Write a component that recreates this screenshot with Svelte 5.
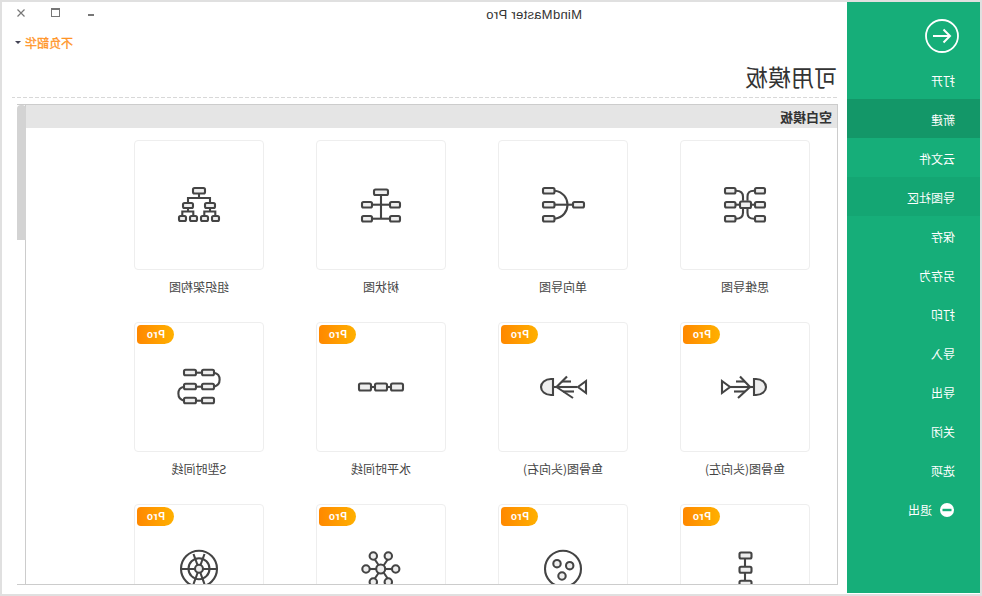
<script>
  const nav = [
    { t: '打开' }, { t: '新建', c: 'active' }, { t: '云文件' }, { t: '导图社区', c: 'hover' },
    { t: '保存' }, { t: '另存为' }, { t: '打印' }, { t: '导入' }, { t: '导出' }, { t: '关闭' }, { t: '选项' }
  ];

  const cards = [
    {
      name: '思维导图',
      p: ['M56 50.7c4 0 7 1 7 6v4', 'M56 78.7c4 0 7-1 7-6v-4', 'M74 50.7c-4 0-6.5 1-6.5 6v4', 'M74 78.7c-4 0-6.5-1-6.5-6v-4', 'M56 64.7h3', 'M71 64.7h3'],
      r: [[45, 48, 10.5, 5.5], [45, 62, 10.5, 5.5], [45, 76, 10.5, 5.5], [60, 61.5, 11, 6.5], [75, 48, 10, 5.5], [75, 62, 10, 5.5], [75, 76, 10, 5.5]]
    },
    {
      name: '单向导图',
      p: ['M57 50.7C65 52 69.5 58 69.5 64.7C69.5 71.4 65 77.4 57 78.7', 'M57 64.7H74'],
      r: [[45, 48, 11.5, 5.5], [45, 62, 11.5, 5.5], [45, 76, 11.5, 5.5], [75, 62, 11, 5.5]]
    },
    {
      name: '树状图',
      p: ['M65 55V78.7', 'M57 64.7H73', 'M57 78.7H73'],
      r: [[58, 49.5, 14, 5.5], [46, 62, 10, 5.5], [46, 76, 10, 5.5], [74, 62, 10, 5.5], [74, 76, 10, 5.5]]
    },
    {
      name: '组织架构图',
      p: ['M65 54V58', 'M54 62V58H76V62', 'M54 68V71.5', 'M48.3 75V71.5H59.3V75', 'M76 68V71.5', 'M70.3 75V71.5H81.3V75'],
      r: [[59, 48, 12, 5.5], [49, 63, 10, 5], [71, 63, 10, 5], [45, 76, 7, 5], [56, 76, 7, 5], [67, 76, 7, 5], [78, 76, 7, 5]]
    },
    {
      name: '鱼骨图(头向左)',
      pro: true,
      p: ['M50 65H74', 'M70 65L60 54.500', 'M65 59.500H56', 'M70 65L58 76', 'M65 69.500H54', 'M42 59L50 65L42 71Z'],
      s: ['M74 57H76C82 57 86 61 86 65C86 69 82 73 76 73H74Z']
    },
    {
      name: '鱼骨图(头向右)',
      pro: true,
      p: ['M55 65H79', 'M58.500 65L69 54.500', 'M64 59.500H73', 'M58.500 65L75 76', 'M65 69.500H76', 'M88 59L80 65L88 71Z'],
      s: ['M55 57H53C47 57 43 61 43 65C43 69 47 73 53 73H55Z']
    },
    {
      name: '水平时间线',
      pro: true,
      p: ['M55 65H75'],
      r: [[43, 61.500, 12, 7], [59, 61.500, 12, 7], [75, 61.500, 12, 7]]
    },
    {
      name: 'S型时间线',
      pro: true,
      p: ['M62 50.700H68', 'M62 64.700H68', 'M62 78.700H68', 'M80 50.700C87.500 52 87.500 63 80 64.700', 'M50 64.700C42.500 66 42.500 77 50 78.700'],
      r: [[50, 47.700, 12, 5.500], [68, 47.700, 12, 5.500], [50, 61.700, 12, 5.500], [68, 61.700, 12, 5.500], [50, 75.700, 12, 5.500], [68, 75.700, 12, 5.500]]
    },
    {
      name: '',
      pro: true,
      p: ['M65 55V62', 'M65 69V76'],
      r: [[59.500, 48.500, 12, 6], [59.500, 62.700, 12, 6], [59.500, 76.700, 12, 6]]
    },
    {
      name: '',
      pro: true,
      c: [[65, 64.700, 18, 'none'], [59, 59.700, 3.700], [71.700, 61.700, 3.700], [64, 72, 3.700]]
    },
    {
      name: '',
      pro: true,
      p: ['M58.500 55L72 75', 'M72 55L58.500 75', 'M54 65H76'],
      c: [[57.300, 52, 3.700], [72.300, 52, 3.700], [50, 65, 3.700], [79.700, 65, 3.700], [57.300, 78, 3.700], [72.300, 78, 3.700], [64.700, 65, 4.500]]
    },
    {
      name: '',
      pro: true,
      p: ['M47 65H83', 'M59.500 50L70.500 80', 'M70.500 50L59.500 80'],
      c: [[65, 64.700, 18, 'none'], [65, 64.700, 10.500, 'none'], [65, 64.700, 4, '#eee']]
    }
  ];
</script>

<div class="window">
  <aside class="side">
    <div class="back">
      <svg width="34" height="34" viewBox="0 0 34 34" fill="none" stroke="#fff">
        <circle cx="17" cy="17" r="16" stroke-width="1.800" />
        <path d="M26 17H9M15.500 10.500L9 17L15.500 23.500" stroke-width="2" />
      </svg>
    </div>
    {#each nav as item}
      <div class="nav {item.c ?? ''}">{item.t}</div>
    {/each}
    <div class="nav exit">
      <svg width="14" height="14" viewBox="0 0 14 14">
        <circle cx="7" cy="7" r="7" fill="#fff" />
        <rect x="2.500" y="5.800" width="9" height="2.400" fill="#16ae79" />
      </svg>
      <span>退出</span>
    </div>
  </aside>

  <main class="main">
    <div class="titlebar">
      <span class="apptitle">MindMaster Pro</span>
      <div class="controls">
        <svg width="6" height="9" viewBox="0 0 6 9"><rect y="6" width="6" height="2" fill="#777" /></svg>
        <svg width="9" height="9" viewBox="0 0 9 9" fill="none" stroke="#777"><rect x=".5" y=".5" width="8" height="8" /><path d="M0 1.500H9" /></svg>
        <svg width="8" height="8" viewBox="0 0 8 8" fill="none" stroke="#777" stroke-width="1.200"><path d="M.5.500L7.500 7.500M7.500.500L.5 7.500" /></svg>
      </div>
    </div>
    <div class="userrow">
      <span class="user">不负韶华</span>
      <span class="caret"></span>
    </div>
    <h1 class="heading">可用模板</h1>
    <section class="panel">
      <div class="content">
        <div class="sechead">空白模板</div>
        <div class="grid">
          {#each cards as card}
            <div class="cell">
              <div class="card">
                {#if card.pro}<span class="pro">Pro</span>{/if}
                <svg class="glyph" width="130" height="130" viewBox="0 0 130 130" fill="none" stroke="#444" stroke-width="2.100">
                  {#each card.p ?? [] as d}<path {d} />{/each}
                  {#each card.s ?? [] as d}<path {d} fill="#eee" />{/each}
                  {#each card.r ?? [] as b}<rect x={b[0]} y={b[1]} width={b[2]} height={b[3]} rx="1.500" fill="#eee" />{/each}
                  {#each card.c ?? [] as c}<circle cx={c[0]} cy={c[1]} r={c[2]} fill={c[3] ?? '#eee'} />{/each}
                </svg>
              </div>
              <div class="label">{card.name}</div>
            </div>
          {/each}
        </div>
      </div>
      <div class="track"><div class="thumb"></div></div>
    </section>
  </main>
</div>

<style>
  :global(body) { margin: 0; background: #fff; }
  .window {
    box-sizing: border-box;
    width: 982px;
    height: 596px;
    border: 2px solid #e0e0e0;
    display: flex;
    overflow: hidden;
    background: #fff;
    transform: scaleX(-1);
    font-family: "Noto Sans CJK SC", "Liberation Sans", sans-serif;
    color: #444;
  }
  .side {
    width: 133px;
    flex: none;
    margin-bottom: 1px;
    background: #16ae79;
    color: #fff;
    font-size: 12px;
  }
  .back { height: 58px; box-sizing: border-box; padding: 17px 0 0 23px; }
  .back svg { display: block; margin-left: -2px; }
  .nav { height: 39px; box-sizing: border-box; padding: 3px 0 0 25px; line-height: 36px; }
  .active { background: #139768; }
  .hover { background: #14a673; }
  .exit { display: flex; align-items: center; gap: 8px; padding: 0 0 0 26px; height: 36px; line-height: 1; margin-top: 3px; }
  .exit svg { flex: none; }
  .main { flex: 1; min-width: 0; display: flex; flex-direction: column; }
  .titlebar { height: 26px; display: flex; align-items: center; padding-left: 265px; flex: none; }
  .apptitle { font: 13px/26px "Liberation Sans", sans-serif; letter-spacing: .3px; color: #333; }
  .controls { margin-left: auto; margin-right: 15px; align-self: flex-start; padding-top: 6px; display: flex; align-items: flex-start; gap: 28px; }
  .controls svg:last-child { margin-left: -2px; margin-top: 1px; }
  .userrow { height: 28px; display: flex; align-items: center; justify-content: flex-end; gap: 4px; padding-right: 13px; flex: none; }
  .user { font-size: 12px; color: #ff9426; -webkit-text-stroke: .3px #ff9426; }
  .caret { width: 0; height: 0; border: 3px solid transparent; border-top: 3px solid #445; border-bottom: 0; }
  .heading {
    margin: 0 10px;
    height: 42px;
    flex: none;
    font-size: 23px;
    font-weight: 400;
    line-height: 41px;
    color: #333;
    background: repeating-linear-gradient(90deg, #d8d8d8 0 4px, transparent 4px 6px) bottom / 100% 1px no-repeat;
  }
  .panel {
    margin: 6px 15px 0 9px;
    height: 481px;
    flex: none;
    box-sizing: border-box;
    border: 1px solid #ccc;
    border-right: 0;
    display: flex;
    overflow: hidden;
  }
  .content { flex: 1; min-width: 0; overflow: hidden; }
  .sechead { height: 23px; line-height: 23px; padding-left: 5px; background: #e5e5e5; font-size: 13px; font-weight: 700; color: #333; }
  .grid { display: grid; grid-template-columns: repeat(4, 130px); column-gap: 52px; padding: 12px 0 0 27px; }
  .cell { height: 182px; }
  .card { position: relative; box-sizing: border-box; width: 130px; height: 130px; border: 1px solid #eee; border-radius: 4px; }
  .glyph { position: absolute; left: -1px; top: -1px; transform: scaleX(-1); }
  .pro {
    position: absolute;
    top: 2px;
    right: 2px;
    width: 37px;
    height: 19px;
    border-radius: 10px 4px 4px 10px;
    background: linear-gradient(90deg, #ffb000, #ff8800);
    color: #fff;
    font: 700 10px/19px "Liberation Sans", sans-serif;
    letter-spacing: .7px;
    text-align: center;
  }
  .label { margin-top: 7px; line-height: 20px; font-size: 12px; text-align: center; color: #444; }
  .track { width: 9px; flex: none; border-left: 1px solid #ccc; box-sizing: border-box; }
  .thumb { width: 9px; margin-left: -1px; height: 135px; background: #d3d3d3; border-radius: 4px 4px 0 0; }
</style>
